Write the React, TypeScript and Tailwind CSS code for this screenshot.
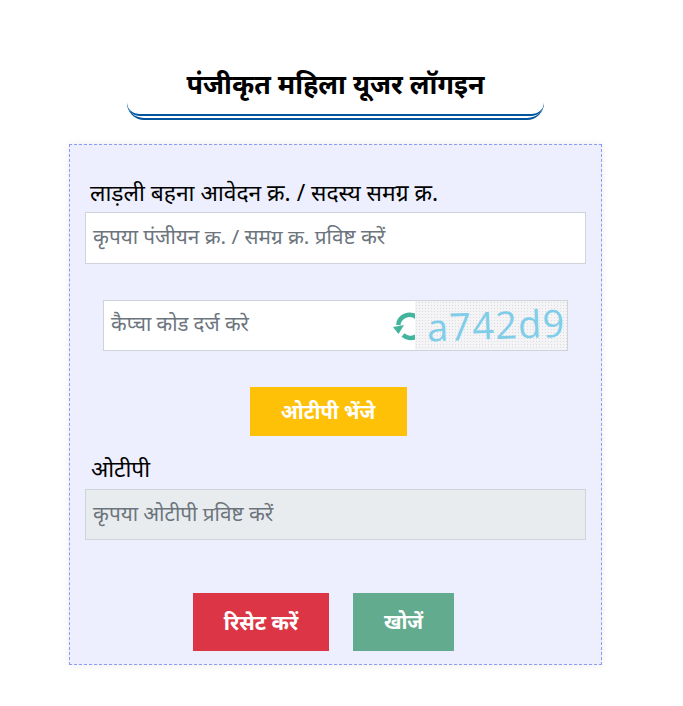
export default function App() {
  return (
    <div className="w-[683px] h-[706px] bg-white overflow-hidden font-['Noto_Sans','Noto_Sans_Devanagari','Lohit_Devanagari','DejaVu_Sans',sans-serif]">
      <div className="ml-[69px] w-[533px] pt-[66px]">
        <div className="flex flex-col items-center">
          <h1 className="h-[37px] leading-[36px] text-[26.8px] font-bold text-black whitespace-nowrap">पंजीकृत महिला यूजर लॉगइन</h1>
          <div className="w-[417px] h-[17px] border-b-[2px] border-[#00559c] rounded-b-[24px]">
            <div className="h-[13px] border-b-[2px] border-[#00559c] rounded-b-[24px]" />
          </div>
        </div>
        <div className="mt-[24px] h-[521px] border border-dashed border-[#8c9bf5] bg-[#edeffe] shadow-[0_0_8px_rgba(0,0,0,0.08)] px-[15px] pt-[33px]">
          <label className="block pl-[5px] h-[34px] leading-[30px] text-[22.8px] text-black whitespace-nowrap">लाड़ली बहना आवेदन क्र. / सदस्य समग्र क्र.</label>
          <div className="h-[52px] w-[501px] border border-[#ced4da] bg-white pl-[7px] leading-[46px] text-[20.7px] text-[#6c757d] whitespace-nowrap">कृपया पंजीयन क्र. / समग्र क्र. प्रविष्ट करें</div>
          <div className="mt-[36px] ml-[18px] w-[465px] h-[51px] border border-[#ced4da] bg-white flex">
            <div className="pl-[7px] flex-1 leading-[45px] text-[20.4px] text-[#6c757d] whitespace-nowrap">कैप्चा कोड दर्ज करे</div>
            <svg viewBox="0 0 30 30" className="w-[30px] h-[30px] mt-[10px] -mr-[8px] shrink-0" fill="none">
              <path d="M24 6.5 A11.5 11.5 0 0 0 5.2 14" stroke="#43b59c" strokeWidth="4.5" />
              <path d="M10 24 A11.5 11.5 0 0 0 24 25" stroke="#43b59c" strokeWidth="4.5" />
              <path d="M0 16 L5.5 23 L11 14 Z" fill="#43b59c" />
            </svg>
            <div className="w-[152px] h-[49px] shrink-0 bg-[#f4f4f6] bg-[radial-gradient(#dcdcde_0.7px,transparent_0.8px)] bg-[length:3px_3px] text-[38px] leading-[47px] tracking-[1.2px] pl-[12px] text-[#80cde9] font-['Open_Sans',sans-serif] whitespace-nowrap">
              <span className="inline-block -rotate-2">a742d9</span>
            </div>
          </div>
          <div className="mt-[36px] flex justify-center">
            <button className="w-[157px] h-[49px] bg-[#ffc107] text-white text-[20px] font-bold leading-[44px] -ml-[15px]">ओटीपी भेंजे</button>
          </div>
          <label className="block mt-[17px] pl-[6px] h-[36px] leading-[32px] text-[22.6px] text-black">ओटीपी</label>
          <div className="h-[51px] w-[501px] border border-[#ced4da] bg-[#e9ecef] pl-[7px] leading-[46px] text-[20.7px] text-[#6c757d] whitespace-nowrap">कृपया ओटीपी प्रविष्ट करें</div>
          <div className="mt-[53px] flex pl-[108px] gap-[24px]">
            <button className="w-[136px] h-[58px] bg-[#dc3545] text-white text-[21px] font-bold leading-[48px]">रिसेट करें</button>
            <button className="w-[101px] h-[58px] bg-[#63ab8f] text-white text-[20px] font-bold leading-[48px]">खोजें</button>
          </div>
        </div>
      </div>
    </div>
  );
}
